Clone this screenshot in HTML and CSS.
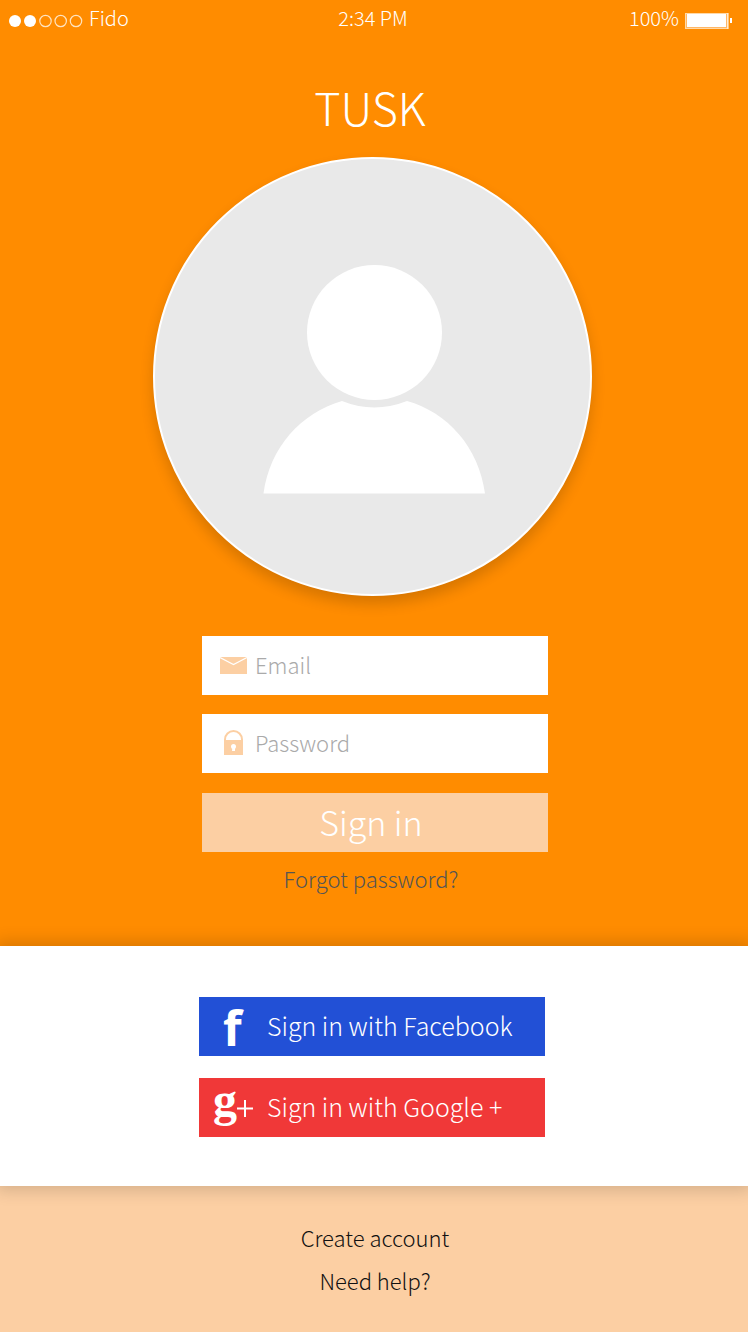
FILE: index.html
```html
<!DOCTYPE html>
<html lang="en">
<head>
<meta charset="utf-8">
<meta name="viewport" content="width=device-width, initial-scale=1">
<title>Tusk</title>
<link rel="stylesheet" href="styles.css">
</head>
<body>
<header class="status">
  <div class="carrier">
    <svg class="signal" width="76" height="14" viewBox="0 0 76 14" aria-hidden="true">
      <g fill="#fff"><circle cx="7" cy="7" r="6"/><circle cx="22" cy="7" r="6"/></g>
      <g fill="none" stroke="#ffe3bf" stroke-width="1.2"><circle cx="37.500" cy="7" r="5.700"/><circle cx="52.700" cy="7" r="5.700"/><circle cx="68" cy="7" r="5.700"/></g>
    </svg>
    <span>Fido</span>
  </div>
  <time class="time">2:34 PM</time>
  <div class="power">
    <span>100%</span>
    <svg class="battery" width="48" height="18" viewBox="0 0 48 18" aria-hidden="true">
      <rect x="1" y="1" width="43" height="16" fill="#ffb766"/>
      <rect x="1.500" y="1.500" width="42" height="15" fill="none" stroke="#ffd9a8"/>
      <rect x="3" y="2" width="39" height="13" fill="#fff"/>
      <path d="M44 1v16" stroke="#fff"/>
      <rect x="46" y="6" width="2" height="5" fill="#fff"/>
    </svg>
  </div>
</header>

<main class="login">
  <h1 class="brand">TUSK</h1>
  <div class="avatar">
    <svg width="224" height="232" viewBox="0 0 224 232" role="img" aria-label="Profile picture">
      <circle cx="112.500" cy="69.500" r="67.500" fill="#fff"/>
      <path d="M1.500 230.500C8 184 39 150 80 138Q112 151 145 138C185 149 217 184 223 230.500Z" fill="#fff"/>
    </svg>
  </div>
  <form class="form">
    <div class="field">
      <label class="field-icon" for="email" aria-label="Email">
        <svg width="28" height="28" viewBox="0 0 28 28"><rect x="0" y="5" width="27" height="17" fill="#fccfa3"/><path d="M0 5.500L13.500 12.500L27 5.500" fill="none" stroke="#fff" stroke-width="1.200"/></svg>
      </label>
      <input class="input" id="email" type="email" placeholder="Email">
    </div>
    <div class="field">
      <label class="field-icon" for="password" aria-label="Password">
        <svg width="28" height="28" viewBox="0 0 28 28"><path d="M5 10.500V9.500A8.500 8.500 0 0 1 22 9.500V10.500" fill="none" stroke="#fccfa3" stroke-width="2"/><rect x="4" y="10" width="19" height="15" fill="#fccfa3"/><circle cx="13.500" cy="16.500" r="2.500" fill="#fff"/><path d="M12.500 16h2.500v5h-3z" fill="#fff"/></svg>
      </label>
      <input class="input" id="password" type="password" placeholder="Password">
    </div>
    <button class="submit" type="submit">Sign in</button>
  </form>
  <a class="forgot" href="#forgot">Forgot password?</a>
</main>

<section class="social">
  <button class="provider facebook" type="button">
    <span class="logo" aria-hidden="true">f</span>
    <span class="provider-name">Sign in with Facebook</span>
  </button>
  <button class="provider google" type="button">
    <span class="logo" aria-hidden="true"><span class="logo-g">g</span><svg width="16" height="18" viewBox="0 0 16 18"><path d="M0 9.500H16M8 1V18" stroke="#fff" stroke-width="2"/></svg></span>
    <span class="provider-name">Sign in with Google +</span>
  </button>
</section>

<footer class="links">
  <a href="#create">Create account</a>
  <a href="#help">Need help?</a>
</footer>
</body>
</html>
```
FILE: styles.css
```css
* { box-sizing: border-box; }

body {
  margin: 0;
  min-height: 100vh;
  display: flex;
  flex-direction: column;
  background: #ff8c00;
  color: #fff;
  font-family: "Noto Sans CJK SC", "Noto Sans", sans-serif;
  font-weight: 300;
  font-size: 22px;
}

input, button { font: inherit; border: 0; border-radius: 0; padding: 0; }
a { text-decoration: none; }
svg { display: block; flex: none; }

.status {
  display: grid;
  grid-template-columns: 1fr auto 1fr;
  align-items: center;
  height: 36px;
  padding: 0 16px 0 8px;
  font-size: 20px;
  line-height: 36px;
}
.carrier, .power { display: flex; align-items: center; gap: 5px; }
.power { justify-content: flex-end; }
.signal, .battery { margin-top: 5px; }
.time { padding-left: 6px; }

.login { display: flex; flex-direction: column; align-items: center; }
.brand {
  margin: 41px 0 0;
  padding-right: 8px;
  font-size: 45px;
  font-weight: 300;
  line-height: 60px;
}
.avatar {
  display: flex;
  align-items: center;
  justify-content: center;
  width: 439px;
  max-width: 90%;
  aspect-ratio: 1;
  margin: 20px 3px 0 0;
  padding: 5px 0 0 2px;
  border: 2px solid #fff;
  border-radius: 50%;
  background: #e9e9e9;
  box-shadow: 0 8px 14px rgba(0, 0, 0, .16);
}
.form {
  display: flex;
  flex-direction: column;
  gap: 19px;
  width: 346px;
  max-width: 90%;
  margin: 40px 0 0 2px;
}
.field { display: flex; align-items: center; height: 59px; padding-left: 18px; background: #fff; }
.field-icon { width: 35px; }
.input { flex: 1; min-width: 0; height: 59px; padding-bottom: 3px; background: none; color: #444; outline: none; }
.input::placeholder { color: #aaa; opacity: 1; }
.submit {
  height: 59px;
  margin-top: 1px;
  padding: 0 8px 2px 0;
  background: #fccfa3;
  color: #fff;
  font-size: 34px;
  font-weight: 300;
  line-height: 56px;
}
.forgot { margin: 10px 0 52px; padding-right: 6px; color: #555; line-height: 32px; }

.social {
  position: relative;
  display: flex;
  flex-direction: column;
  align-items: center;
  gap: 22px;
  padding: 51px 4px 49px 0;
  background: #fff;
  box-shadow: 0 0 16px 4px rgba(0, 0, 0, .16);
}
.provider {
  display: flex;
  align-items: center;
  width: 346px;
  max-width: 90%;
  height: 59px;
  padding-left: 14px;
  color: #fff;
  font-size: 25px;
  line-height: 56px;
}
.provider-name { padding-bottom: 4px; }
.facebook { background: #2250d6; }
.google { background: #f03838; }
.logo { display: flex; align-items: center; width: 54px; font-weight: 700; }
.facebook .logo { padding: 2px 0 0 10px; font-family: "Open Sans", sans-serif; font-size: 48px; }
.logo-g { padding-bottom: 16px; font-family: "Liberation Serif", serif; font-size: 48px; line-height: 40px; }

.links {
  flex: 1;
  display: flex;
  flex-direction: column;
  align-items: center;
  gap: 11px;
  padding: 35px 0 36px 2px;
  background: #fccfa3;
}
.links a { color: #111; line-height: 32px; }
```
